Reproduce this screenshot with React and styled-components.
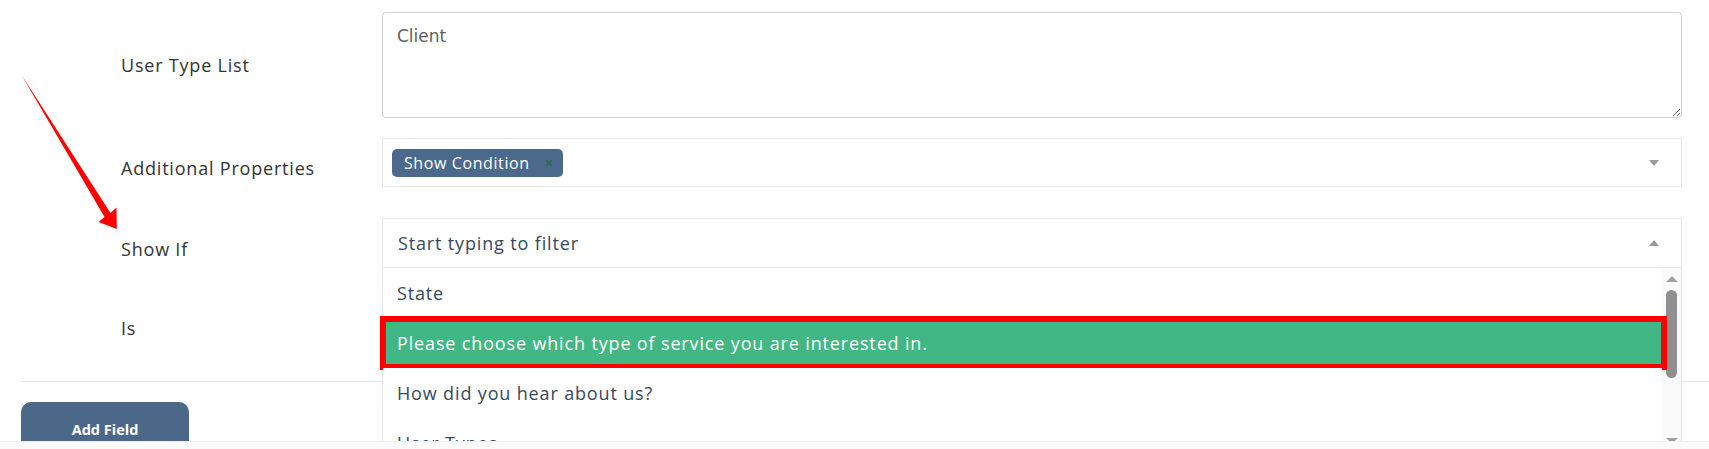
import React from "react";
import styled, { createGlobalStyle } from "styled-components";

const GlobalStyle = createGlobalStyle`
  html, body { margin: 0; padding: 0; background: #fff; }
  body { font-family: "Open Sans", "Noto Sans", sans-serif; }
  * { box-sizing: border-box; }
`;

const Page = styled.div`
  position: relative;
  width: 1709px;
  height: 449px;
  display: flex;
  flex-direction: column;
  overflow: hidden;
`;

const Main = styled.div`
  position: relative;
  height: 441px;
  flex: none;
  overflow: hidden;
  padding-left: 21px;
`;

const Footer = styled.div`
  flex: 1;
  background: #fafafa;
  border-top: 1px solid #efefef;
`;

const Row = styled.div`
  display: grid;
  grid-template-columns: 361px 1300px;
  margin-top: ${(p) => p.$gap}px;
  position: relative;
  z-index: ${(p) => p.$z || 1};
`;

const Label = styled.div`
  padding-left: 100px;
  padding-top: ${(p) => p.$shift || 0}px;
  display: flex;
  align-items: center;
  font-size: 18px;
  letter-spacing: 0.8px;
  color: #333;
`;

const TextArea = styled.textarea`
  display: block;
  width: 1300px;
  height: 106px;
  margin: 0;
  border: 1px solid #cfcfd4;
  border-radius: 4px;
  padding: 13px 14px;
  font-family: "DejaVu Sans", sans-serif;
  font-size: 17px;
  color: #555;
  resize: vertical;
  outline: none;
  &::placeholder { color: #5e5e5e; }
`;

const SelectBox = styled.div`
  position: relative;
  height: ${(p) => (p.$open ? 50 : 49)}px;
  border: 1px solid #e8e8e8;
  background: #fff;
  display: flex;
  align-items: center;
  padding-left: ${(p) => (p.$tags ? 9 : 15)}px;
  padding-right: 50px;
  color: #35495e;
  font-size: 18px;
  letter-spacing: 0.85px;
`;

const Caret = styled.span`
  position: absolute;
  right: 22px;
  top: 50%;
  margin-top: -3px;
  width: 0;
  height: 0;
  border-left: 5.5px solid transparent;
  border-right: 5.5px solid transparent;
  ${(p) =>
    p.$up
      ? "border-bottom: 6px solid #9a9a9a;"
      : "border-top: 6px solid #9a9a9a;"}
`;

const Tag = styled.span`
  display: inline-flex;
  align-items: center;
  height: 28px;
  padding: 0 9px 0 12px;
  border-radius: 5px;
  background: #4b6a8b;
  color: #fff;
  font-size: 16px;
  letter-spacing: 0.6px;
  gap: 15px;
`;

const TagIcon = styled.span`
  color: #266d4d;
  font-size: 15px;
  font-weight: 700;
  line-height: 1;
`;

const DropList = styled.div`
  position: absolute;
  left: 0;
  right: 0;
  top: 50px;
  height: 200px;
  background: #fff;
  border-left: 1px solid #e8e8e8;
  border-right: 1px solid #e8e8e8;
  display: flex;
  z-index: 5;
`;

const Options = styled.div`
  flex: 1;
  display: flex;
  flex-direction: column;
`;

const Option = styled.div`
  position: relative;
  height: 50px;
  flex: none;
  display: flex;
  align-items: center;
  padding-left: 14px;
  font-size: 18px;
  letter-spacing: 0.85px;
  color: ${(p) => (p.$active ? "#fff" : "#35495e")};
  background: ${(p) => (p.$active ? "#41b883" : "#fff")};
`;

const Highlight = styled.span`
  position: absolute;
  left: -3px;
  right: -5px;
  top: -2px;
  height: 54px;
  border: 6.5px solid #ff0000;
  pointer-events: none;
`;

const ScrollTrack = styled.div`
  width: 19px;
  flex: none;
  background: #fafafa;
  display: flex;
  flex-direction: column;
  align-items: center;
  padding-top: 8px;
`;

const ScrollArrow = styled.span`
  width: 0;
  height: 0;
  border-left: 6px solid transparent;
  border-right: 6px solid transparent;
  ${(p) =>
    p.$down
      ? "border-top: 6px solid #a3a3a3; margin-top: 60px;"
      : "border-bottom: 6px solid #a3a3a3;"}
`;

const Thumb = styled.span`
  width: 11px;
  height: 88px;
  margin-top: 8px;
  border-radius: 6px;
  background: #8f8f8f;
`;

const Divider = styled.div`
  margin-top: 34px;
  border-top: 1px solid #e6e6e6;
  position: relative;
  z-index: 0;
`;

const Button = styled.button`
  display: flex;
  align-items: center;
  justify-content: center;
  margin-top: 20px;
  width: 168px;
  height: 54px;
  border: none;
  border-radius: 10px;
  background: #4b6889;
  color: #fff;
  font-family: "Open Sans", sans-serif;
  font-weight: 700;
  font-size: 14.5px;
  padding: 0;
`;

const Annotation = styled.svg`
  position: absolute;
  left: 0;
  top: 0;
  z-index: 10;
  pointer-events: none;
`;

const FieldCell = styled.div`
  position: relative;
`;

export default function App() {
  return (
    <Page>
      <GlobalStyle />
      <Main>
        <Row $gap={12}>
          <Label>User Type List</Label>
          <FieldCell>
            <TextArea placeholder="Client" />
          </FieldCell>
        </Row>
        <Row $gap={20}>
          <Label $shift={11}>Additional Properties</Label>
          <FieldCell>
            <SelectBox $tags>
              <Tag>
                Show Condition
                <TagIcon>×</TagIcon>
              </Tag>
              <Caret />
            </SelectBox>
          </FieldCell>
        </Row>
        <Row $gap={31} $z={5}>
          <Label $shift={11}>Show If</Label>
          <FieldCell>
            <SelectBox $open>
              Start typing to filter
              <Caret $up />
            </SelectBox>
            <DropList>
              <Options>
                <Option>State</Option>
                <Option $active>
                  Please choose which type of service you are interested in.
                  <Highlight />
                </Option>
                <Option>How did you hear about us?</Option>
                <Option>User Types</Option>
              </Options>
              <ScrollTrack>
                <ScrollArrow />
                <Thumb />
                <ScrollArrow $down />
              </ScrollTrack>
            </DropList>
          </FieldCell>
        </Row>
        <Row $gap={30}>
          <Label $shift={11}>Is</Label>
          <FieldCell>
            <SelectBox>
              <Caret />
            </SelectBox>
          </FieldCell>
        </Row>
        <Divider />
        <Button>Add Field</Button>
        <Annotation width="140" height="240" viewBox="0 0 140 240">
          <polygon
            points="21.5,75 110.5,213 116.5,207.5 116.8,229 98.5,222 104.5,217"
            fill="#ff0000"
          />
        </Annotation>
      </Main>
      <Footer />
    </Page>
  );
}
